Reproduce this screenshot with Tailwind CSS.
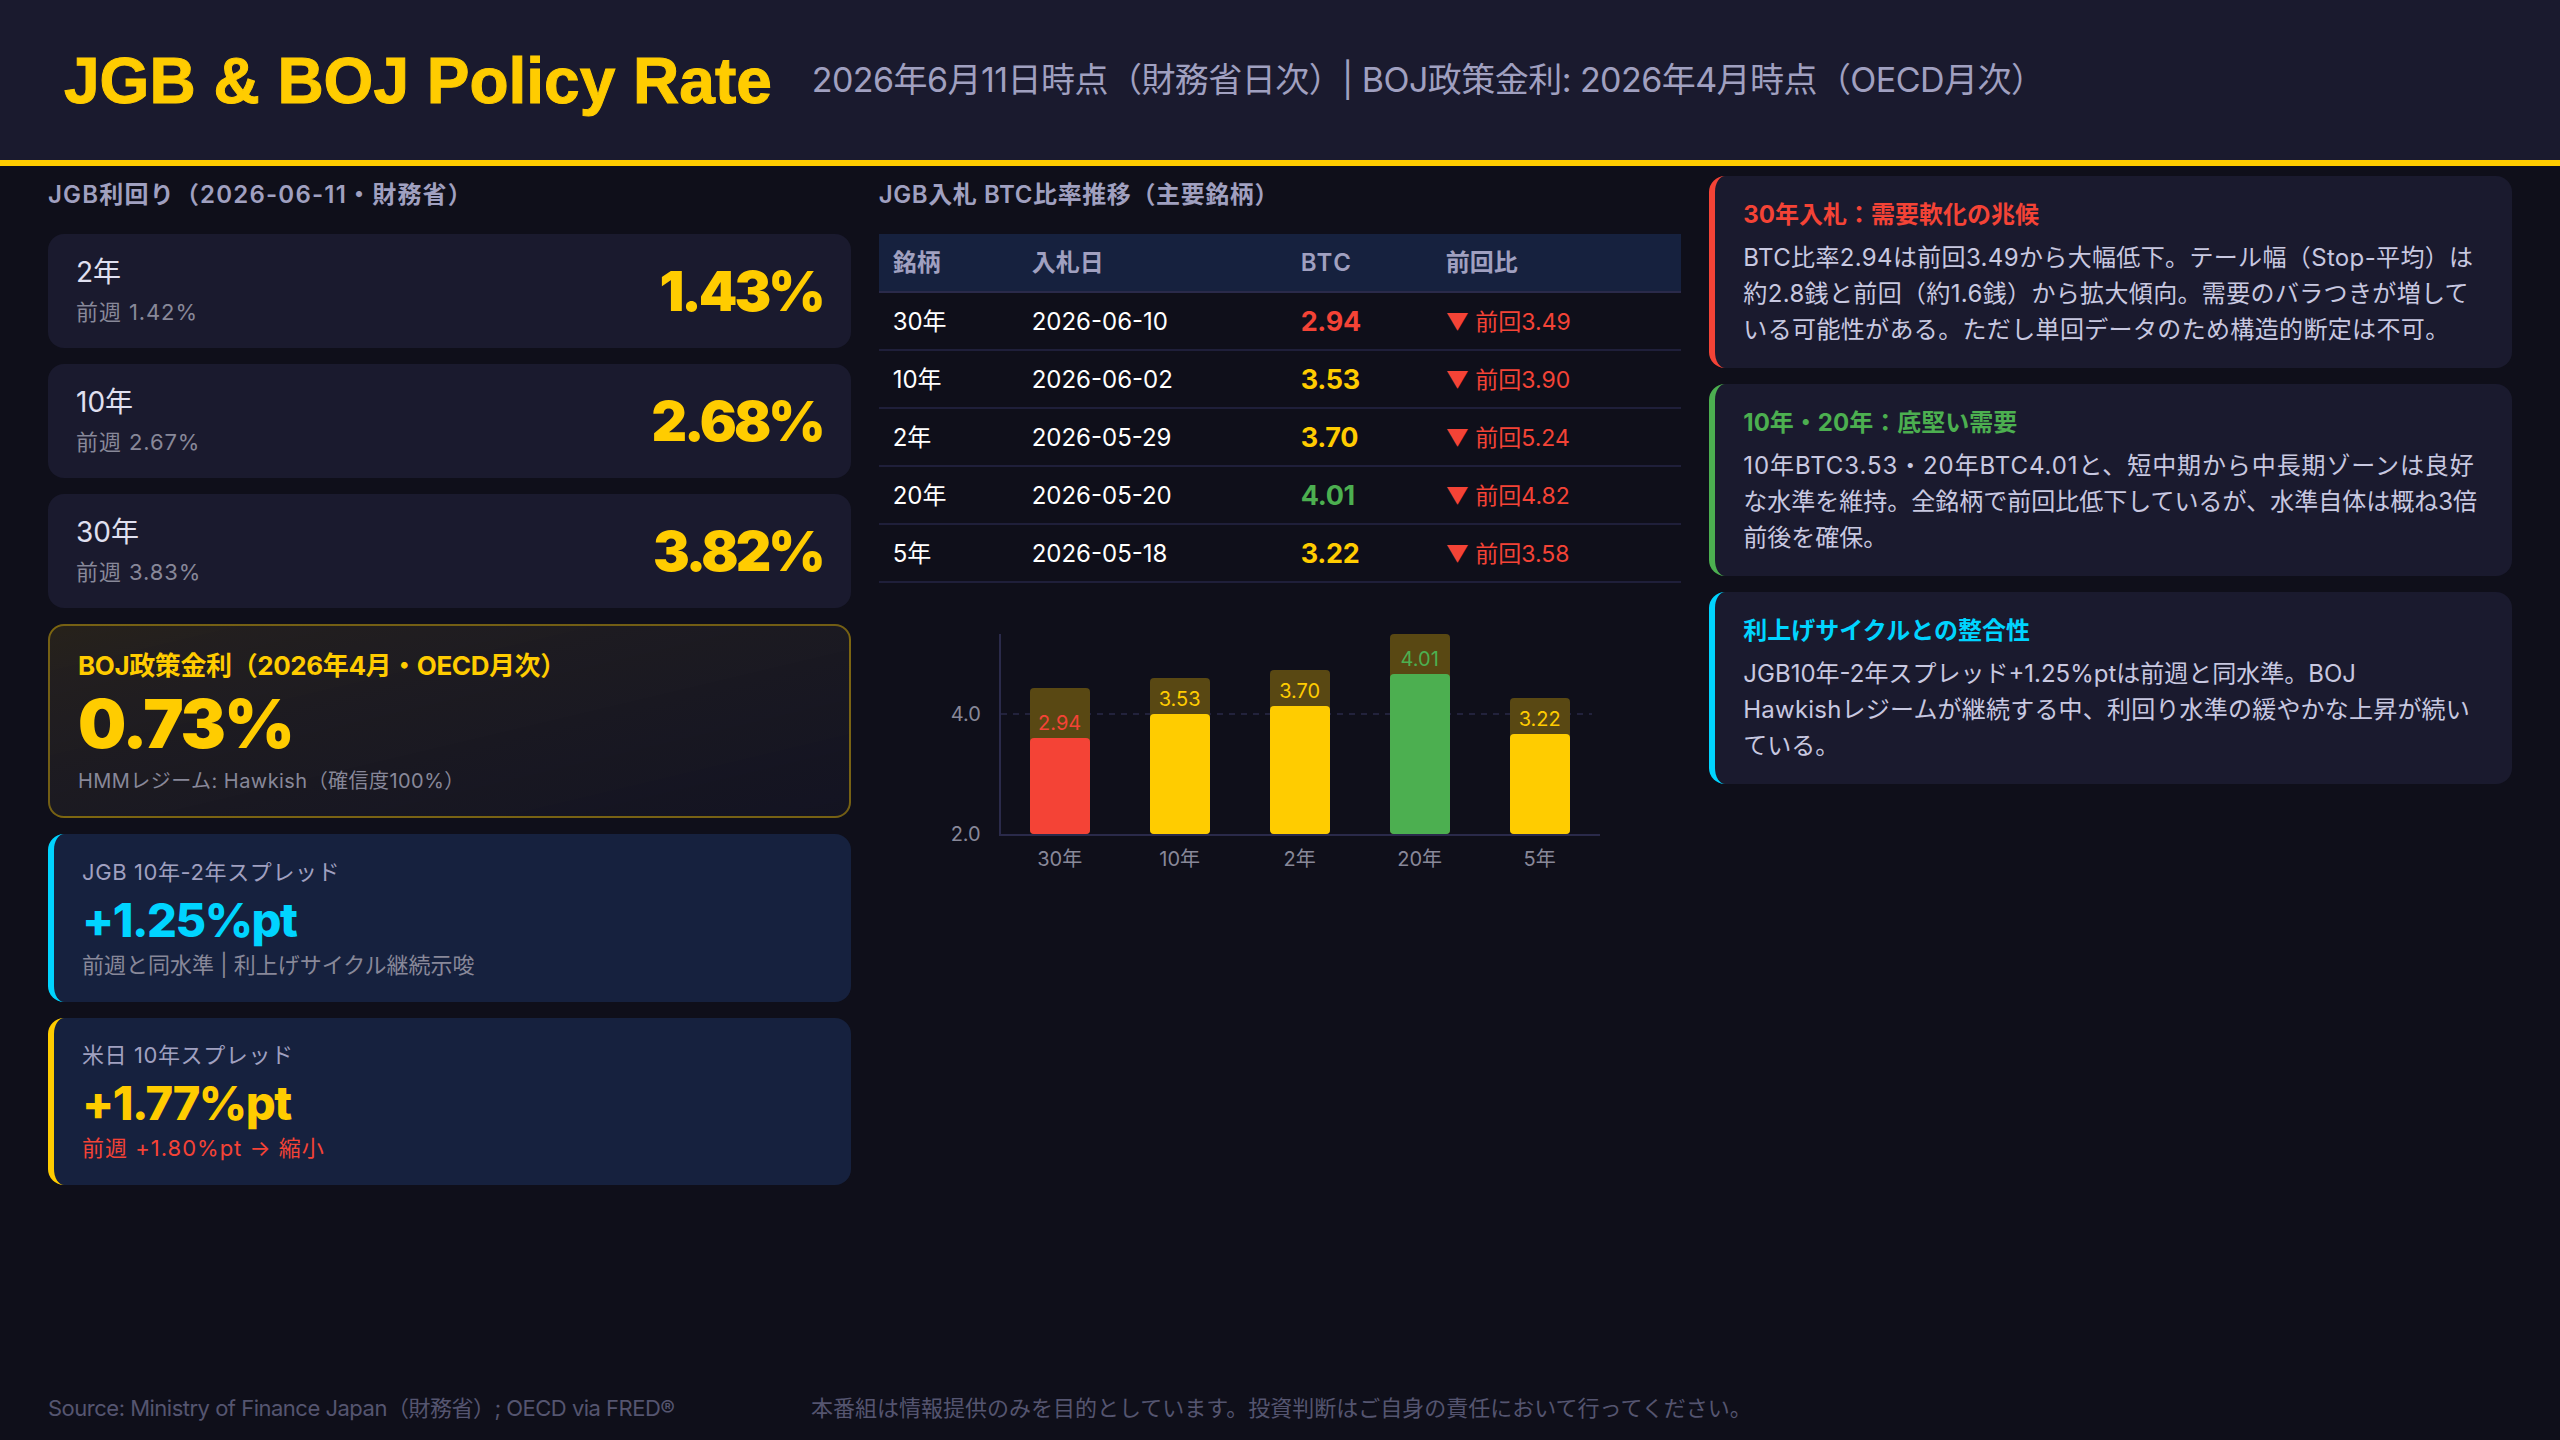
<!DOCTYPE html>
<html lang="ja">
<head>
<meta charset="utf-8">
<script src="https://cdn.jsdelivr.net/npm/@tailwindcss/browser@4"></script>
<title>JGB & BOJ Policy Rate</title>
</head>
<body class="w-[2560px] h-[1440px] overflow-hidden bg-[#0f0f1a] font-['Inter','Noto_Sans_CJK_JP',sans-serif]">
<div class="flex flex-col h-full">
  <header class="h-[166px] shrink-0 bg-[#1a1a2e] border-b-[6px] border-[#ffcc00] flex items-center pl-16 gap-10">
    <h1 class="font-['Liberation_Sans',sans-serif] text-[64px] font-bold text-[#ffcc00] leading-none pt-[2px] [-webkit-text-stroke:1px_#ffcc00]">JGB &amp; BOJ Policy Rate</h1>
    <p class="text-[34px] tracking-[-0.55px] text-[#a0a0c0] leading-none">2026年6月11日時点（財務省日次）| BOJ政策金利: 2026年4月時点（OECD月次）</p>
  </header>

  <main class="grid grid-cols-3 gap-7 px-12 pt-[10px]">
    <!-- Left column -->
    <section class="flex flex-col">
      <h2 class="text-[24px] font-semibold tracking-[1.2px] text-[#a0a0c0] leading-[38px] mb-[20px]">JGB利回り（2026-06-11・財務省）</h2>
      <div class="flex flex-col gap-4">
        <div class="h-[114px] rounded-[16px] bg-[#1a1a2e] px-7 flex items-center justify-between">
          <div><div class="text-[28px] text-[#e0e0f0] leading-[40px] mb-[2px]">2年</div><div class="text-[22px] tracking-[0.9px] text-[#888899] leading-[36px]">前週 1.42%</div></div>
          <div class="text-[55px] font-black tracking-[-3px] text-[#ffcc00]">1.43%</div>
        </div>
        <div class="h-[114px] rounded-[16px] bg-[#1a1a2e] px-7 flex items-center justify-between">
          <div><div class="text-[28px] text-[#e0e0f0] leading-[40px] mb-[2px]">10年</div><div class="text-[22px] tracking-[0.9px] text-[#888899] leading-[36px]">前週 2.67%</div></div>
          <div class="text-[55px] font-black tracking-[-3px] text-[#ffcc00]">2.68%</div>
        </div>
        <div class="h-[114px] rounded-[16px] bg-[#1a1a2e] px-7 flex items-center justify-between">
          <div><div class="text-[28px] text-[#e0e0f0] leading-[40px] mb-[2px]">30年</div><div class="text-[22px] tracking-[0.9px] text-[#888899] leading-[36px]">前週 3.83%</div></div>
          <div class="text-[55px] font-black tracking-[-3px] text-[#ffcc00]">3.82%</div>
        </div>
        <div class="h-[194px] rounded-[16px] border-2 border-[#ffcc00]/40 bg-linear-to-br from-[#ffcc00]/10 to-[#1a1a2e]/40 px-7 pt-[2px] flex flex-col justify-center">
          <div class="text-[26px] font-bold tracking-[-0.4px] text-[#ffcc00] leading-[36px]">BOJ政策金利（2026年4月・OECD月次）</div>
          <div class="text-[68px] font-black tracking-[-2px] text-[#ffcc00] leading-[72px] mt-[3px]">0.73%</div>
          <div class="text-[20px] tracking-[0.45px] text-[#888899] leading-[32px] mt-[6px]">HMMレジーム: Hawkish（確信度100%）</div>
        </div>
        <div class="h-[168px] rounded-[16px] border-l-[6px] border-[#00d4ff] bg-[#16213e] px-7 flex flex-col justify-center">
          <div class="text-[22px] tracking-[0.6px] text-[#a0a0c0] leading-[36px]">JGB 10年-2年スプレッド</div>
          <div class="text-[47px] font-extrabold tracking-[-1.5px] text-[#00d4ff] leading-[60px]">+1.25%pt</div>
          <div class="text-[22px] text-[#888899] leading-[36px] -mt-[3px]">前週と同水準 | 利上げサイクル継続示唆</div>
        </div>
        <div class="h-[167px] rounded-[16px] border-l-[6px] border-[#ffcc00] bg-[#16213e] px-7 flex flex-col justify-center">
          <div class="text-[22px] tracking-[0.6px] text-[#a0a0c0] leading-[36px]">米日 10年スプレッド</div>
          <div class="text-[47px] font-extrabold tracking-[-1.5px] text-[#ffcc00] leading-[60px]">+1.77%pt</div>
          <div class="text-[22px] tracking-[1px] text-[#f44336] leading-[36px] -mt-[3px]">前週 +1.80%pt → 縮小</div>
        </div>
      </div>
    </section>

    <!-- Middle column -->
    <section class="flex flex-col">
      <h2 class="text-[24px] font-semibold tracking-[0.6px] text-[#a0a0c0] leading-[38px] mb-[20px]">JGB入札 BTC比率推移（主要銘柄）</h2>
      <table class="w-full border-collapse table-fixed text-[24px]">
        <thead>
          <tr class="h-[58px] bg-[#16213e] border-b-2 border-[#2a2a4a] text-[24px] font-semibold text-[#a0a0c0] text-left">
            <th class="w-[139px] pl-[14px] font-semibold">銘柄</th><th class="w-[269px] pl-[14px] font-semibold">入札日</th><th class="w-[145px] pl-[14px] font-semibold tracking-[1.5px]">BTC</th><th class="pl-[14px] font-semibold">前回比</th>
          </tr>
        </thead>
        <tbody class="text-[#ffffff] [&_td]:pt-[2px]">
          <tr class="h-[58px] border-b-2 border-[#1f1f3a]"><td class="pl-[14px]">30年</td><td class="pl-[14px]">2026-06-10</td><td class="pl-[14px] text-[27px] font-bold tracking-[-0.3px] text-[#f44336]">2.94</td><td class="pl-[14px] text-[23px] text-[#f44336]">▼ 前回3.49</td></tr>
          <tr class="h-[58px] border-b-2 border-[#1f1f3a]"><td class="pl-[14px]">10年</td><td class="pl-[14px]">2026-06-02</td><td class="pl-[14px] text-[27px] font-bold tracking-[-0.3px] text-[#ffcc00]">3.53</td><td class="pl-[14px] text-[23px] text-[#f44336]">▼ 前回3.90</td></tr>
          <tr class="h-[58px] border-b-2 border-[#1f1f3a]"><td class="pl-[14px]">2年</td><td class="pl-[14px]">2026-05-29</td><td class="pl-[14px] text-[27px] font-bold tracking-[-0.3px] text-[#ffcc00]">3.70</td><td class="pl-[14px] text-[23px] text-[#f44336]">▼ 前回5.24</td></tr>
          <tr class="h-[58px] border-b-2 border-[#1f1f3a]"><td class="pl-[14px]">20年</td><td class="pl-[14px]">2026-05-20</td><td class="pl-[14px] text-[27px] font-bold tracking-[-0.3px] text-[#4caf50]">4.01</td><td class="pl-[14px] text-[23px] text-[#f44336]">▼ 前回4.82</td></tr>
          <tr class="h-[58px] border-b-2 border-[#1f1f3a]"><td class="pl-[14px]">5年</td><td class="pl-[14px]">2026-05-18</td><td class="pl-[14px] text-[27px] font-bold tracking-[-0.3px] text-[#ffcc00]">3.22</td><td class="pl-[14px] text-[23px] text-[#f44336]">▼ 前回3.58</td></tr>
        </tbody>
      </table>

      <!-- Chart -->
      <div class="relative ml-[120px] mt-[51px] w-[601px] h-[202px] border-l-2 border-b-2 border-[#2a2a4a] flex items-end pl-[29px] gap-[60px] text-[20px]">
        <div class="absolute left-0 right-[8px] top-[79px] h-[2px] bg-[repeating-linear-gradient(90deg,#22223c_0_6px,transparent_6px_12px)]"></div>
        <span class="absolute -left-[50px] top-[68px] text-[#888899] leading-[24px]">4.0</span>
        <span class="absolute -left-[50px] bottom-[-12px] text-[#888899] leading-[24px]">2.0</span>
        <div class="relative w-[60px] h-[146px] rounded-[4px] bg-[#594813] flex flex-col justify-end items-center text-[#f44336]"><span class="leading-[24px] mb-[3px]">2.94</span><div class="w-full h-[96px] rounded-[4px] bg-[#f44336]"></div><span class="absolute top-[calc(100%+10px)] text-[#888899] whitespace-nowrap">30年</span></div>
        <div class="relative w-[60px] h-[156px] rounded-[4px] bg-[#594813] flex flex-col justify-end items-center text-[#ffcc00]"><span class="leading-[24px] mb-[3px]">3.53</span><div class="w-full h-[120px] rounded-[4px] bg-[#ffcc00]"></div><span class="absolute top-[calc(100%+10px)] text-[#888899] whitespace-nowrap">10年</span></div>
        <div class="relative w-[60px] h-[164px] rounded-[4px] bg-[#594813] flex flex-col justify-end items-center text-[#ffcc00]"><span class="leading-[24px] mb-[3px]">3.70</span><div class="w-full h-[128px] rounded-[4px] bg-[#ffcc00]"></div><span class="absolute top-[calc(100%+10px)] text-[#888899] whitespace-nowrap">2年</span></div>
        <div class="relative w-[60px] h-[200px] rounded-[4px] bg-[#594813] flex flex-col justify-end items-center text-[#4caf50]"><span class="leading-[24px] mb-[3px]">4.01</span><div class="w-full h-[160px] rounded-[4px] bg-[#4caf50]"></div><span class="absolute top-[calc(100%+10px)] text-[#888899] whitespace-nowrap">20年</span></div>
        <div class="relative w-[60px] h-[136px] rounded-[4px] bg-[#594813] flex flex-col justify-end items-center text-[#ffcc00]"><span class="leading-[24px] mb-[3px]">3.22</span><div class="w-full h-[100px] rounded-[4px] bg-[#ffcc00]"></div><span class="absolute top-[calc(100%+10px)] text-[#888899] whitespace-nowrap">5年</span></div>
      </div>
    </section>

    <!-- Right column -->
    <section class="flex flex-col gap-4">
      <div class="h-[192px] rounded-[16px] border-l-[6px] border-[#f44336] bg-[#1a1a2e] pl-7 flex flex-col justify-center">
        <div class="text-[24px] font-bold text-[#f44336] leading-[36px] mb-[7px]">30年入札：需要軟化の兆候</div>
        <p class="text-[24px] text-[#c8c8e0] leading-[36px] whitespace-nowrap"><span class="block tracking-[0.35px]">BTC比率2.94は前回3.49から大幅低下。テール幅（Stop-平均）は</span><span class="block tracking-[0.35px]">約2.8銭と前回（約1.6銭）から拡大傾向。需要のバラつきが増して</span><span class="block tracking-[0.35px]">いる可能性がある。ただし単回データのため構造的断定は不可。</span></p>
      </div>
      <div class="h-[192px] rounded-[16px] border-l-[6px] border-[#4caf50] bg-[#1a1a2e] pl-7 flex flex-col justify-center">
        <div class="text-[24px] font-bold text-[#4caf50] leading-[36px] mb-[7px]">10年・20年：底堅い需要</div>
        <p class="text-[24px] text-[#c8c8e0] leading-[36px] whitespace-nowrap"><span class="block tracking-[0.9px]">10年BTC3.53・20年BTC4.01と、短中期から中長期ゾーンは良好</span><span class="block">な水準を維持。全銘柄で前回比低下しているが、水準自体は概ね3倍</span><span class="block">前後を確保。</span></p>
      </div>
      <div class="h-[192px] rounded-[16px] border-l-[6px] border-[#00d4ff] bg-[#1a1a2e] pl-7 flex flex-col justify-center">
        <div class="text-[24px] font-bold text-[#00d4ff] leading-[36px] mb-[7px]">利上げサイクルとの整合性</div>
        <p class="text-[24px] text-[#c8c8e0] leading-[36px] whitespace-nowrap"><span class="block">JGB10年-2年スプレッド+1.25%ptは前週と同水準。BOJ</span><span class="block tracking-[0.2px]">Hawkishレジームが継続する中、利回り水準の緩やかな上昇が続い</span><span class="block">ている。</span></p>
      </div>
    </section>
  </main>

  <footer class="mt-auto h-[48px] pl-12 flex text-[22px] text-[#555570] leading-[32px]">
    <span class="w-[763px] shrink-0 tracking-[-0.5px]">Source: Ministry of Finance Japan（財務省）; OECD via FRED®</span>
    <span>本番組は情報提供のみを目的としています。投資判断はご自身の責任において行ってください。</span>
  </footer>
</div>
</body>
</html>
